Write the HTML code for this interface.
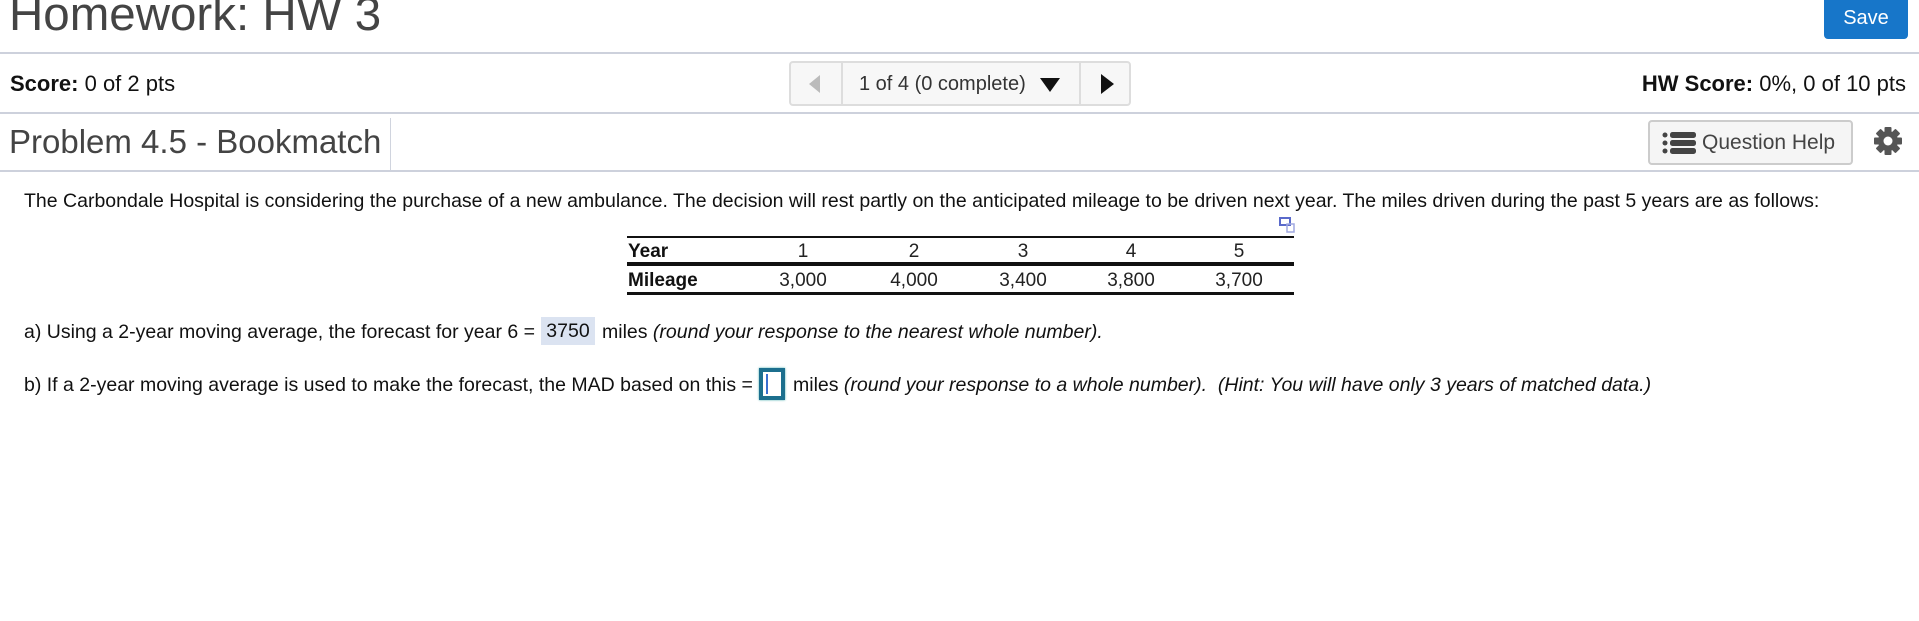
<!DOCTYPE html>
<html><head><meta charset="utf-8"><style>
*{margin:0;padding:0;box-sizing:border-box}
body{width:1919px;height:621px;background:#fff;font-family:"Liberation Sans",Arial,sans-serif;color:#222;position:relative;overflow:hidden}
.a{position:absolute;white-space:nowrap}
.hr{position:absolute;left:0;width:1919px;height:2px;background:#cdd1dc}
</style></head><body>
<div class="a" style="left:9px;top:-13px;font-size:47.5px;color:#444;">Homework: HW 3</div>
<div class="a" style="left:1824px;top:0;width:84px;height:39px;background:#1776c9;border-radius:0 0 4px 4px;color:#fff;font-size:20px;line-height:36px;text-align:center;">Save</div>
<div class="hr" style="top:52px"></div>
<div class="a" style="left:10px;top:71px;font-size:22px;color:#111"><b>Score:</b> 0 of 2 pts</div>
<div class="a" style="left:789px;top:61px;width:342px;height:45px;border:2px solid #ddd;border-radius:4px;background:#f7f7f7;"></div>
<div class="a" style="left:841px;top:61px;width:2px;height:45px;background:#ddd"></div>
<div class="a" style="left:1079px;top:61px;width:2px;height:45px;background:#ddd"></div>
<div class="a" style="left:809px;top:75px;width:0;height:0;border-top:9px solid transparent;border-bottom:9px solid transparent;border-right:11px solid #bbb"></div>
<div class="a" style="left:859px;top:73px;font-size:20px;color:#333">1 of 4 (0 complete)</div>
<div class="a" style="left:1040px;top:78px;width:0;height:0;border-left:10px solid transparent;border-right:10px solid transparent;border-top:14px solid #111"></div>
<div class="a" style="left:1101px;top:74px;width:0;height:0;border-top:10px solid transparent;border-bottom:10px solid transparent;border-left:13px solid #111"></div>
<div class="a" style="right:13px;top:71px;font-size:22px;color:#111"><b>HW Score:</b> 0%, 0 of 10 pts</div>
<div class="hr" style="top:112px"></div>
<div class="a" style="left:9px;top:123px;font-size:33px;color:#444">Problem 4.5 - Bookmatch</div>
<div class="a" style="left:390px;top:118px;width:1px;height:52px;background:#d0d4de"></div>
<div class="a" style="left:1648px;top:120px;width:205px;height:45px;border:2px solid #ccc;border-radius:4px;background:#f5f5f5;"></div>
<svg class="a" style="left:1662px;top:132px" width="34" height="22" viewBox="0 0 34 22"><g fill="#444"><circle cx="3" cy="3" r="2.5"/><circle cx="3" cy="11" r="2.5"/><circle cx="3" cy="19" r="2.5"/><rect x="8" y="0" width="26" height="6" rx="2.5"/><rect x="8" y="8" width="26" height="6" rx="2.5"/><rect x="8" y="16" width="26" height="6" rx="2.5"/></g></svg>
<div class="a" style="left:1702px;top:131px;font-size:21px;color:#444">Question Help</div>
<svg class="a" style="left:1873px;top:126px" width="30" height="30" viewBox="0 0 30 30"><g fill="#555"><circle cx="15" cy="15" r="10"/><g><rect x="11.5" y="1" width="7" height="28" rx="1"/><rect x="11.5" y="1" width="7" height="28" rx="1" transform="rotate(45 15 15)"/><rect x="11.5" y="1" width="7" height="28" rx="1" transform="rotate(90 15 15)"/><rect x="11.5" y="1" width="7" height="28" rx="1" transform="rotate(135 15 15)"/></g></g><circle cx="15" cy="15" r="4.5" fill="#fff"/></svg>
<div class="hr" style="top:170px"></div>
<div class="a" style="left:24px;top:190px;font-size:19.5px;color:#111">The Carbondale Hospital is considering the purchase of a new ambulance. The decision will rest partly on the anticipated mileage to be driven next year. The miles driven during the past 5 years are as follows:</div>
<svg class="a" style="left:1279px;top:217px" width="16" height="16" viewBox="0 0 16 16"><rect x="1" y="1" width="10" height="7" fill="#fff" stroke="#5a6acb" stroke-width="2"/><rect x="8" y="7" width="7" height="8" fill="none" stroke="#a0a8e0" stroke-width="1.5"/></svg>
<div class="a" style="left:627px;top:236px;width:667px;height:2px;background:#111"></div>
<div class="a" style="left:627px;top:262px;width:667px;height:4px;background:#111"></div>
<div class="a" style="left:627px;top:292px;width:667px;height:3px;background:#111"></div>
<div class="a" style="left:628px;top:241px;font-size:19px;font-weight:bold;color:#111">Year</div>
<div class="a" style="left:628px;top:270px;font-size:19px;font-weight:bold;color:#111">Mileage</div>
<div class="a" style="left:803px;top:241px;font-size:19px;transform:translateX(-50%)">1</div>
<div class="a" style="left:914px;top:241px;font-size:19px;transform:translateX(-50%)">2</div>
<div class="a" style="left:1023px;top:241px;font-size:19px;transform:translateX(-50%)">3</div>
<div class="a" style="left:1131px;top:241px;font-size:19px;transform:translateX(-50%)">4</div>
<div class="a" style="left:1239px;top:241px;font-size:19px;transform:translateX(-50%)">5</div>
<div class="a" style="left:803px;top:270px;font-size:19px;transform:translateX(-50%)">3,000</div>
<div class="a" style="left:914px;top:270px;font-size:19px;transform:translateX(-50%)">4,000</div>
<div class="a" style="left:1023px;top:270px;font-size:19px;transform:translateX(-50%)">3,400</div>
<div class="a" style="left:1131px;top:270px;font-size:19px;transform:translateX(-50%)">3,800</div>
<div class="a" style="left:1239px;top:270px;font-size:19px;transform:translateX(-50%)">3,700</div>
<div class="a" style="left:24px;top:321px;font-size:19.5px;color:#111">a) Using a 2-year moving average, the forecast for year 6 =</div>
<div class="a" style="left:541px;top:317px;width:54px;height:28px;background:#dbe3f1;text-align:center;line-height:28px;font-size:19.5px;color:#111">3750</div>
<div class="a" style="left:602px;top:321px;font-size:19.5px;color:#111">miles <i>(round your response to the nearest whole number).</i></div>
<div class="a" style="left:24px;top:374px;font-size:19.5px;color:#111">b) If a 2-year moving average is used to make the forecast, the MAD based on this =</div>
<div class="a" style="left:759px;top:368px;width:26px;height:32px;border:4px solid #1c6f8e;box-shadow:0 0 2px #4aa;background:#fff"></div>
<div class="a" style="left:766px;top:374px;width:2px;height:20px;background:#3a6fd0"></div>
<div class="a" style="left:793px;top:374px;font-size:19.5px;color:#111">miles <i>(round your response to a whole number).&nbsp; (Hint: You will have only 3 years of matched data.)</i></div>
</body></html>
